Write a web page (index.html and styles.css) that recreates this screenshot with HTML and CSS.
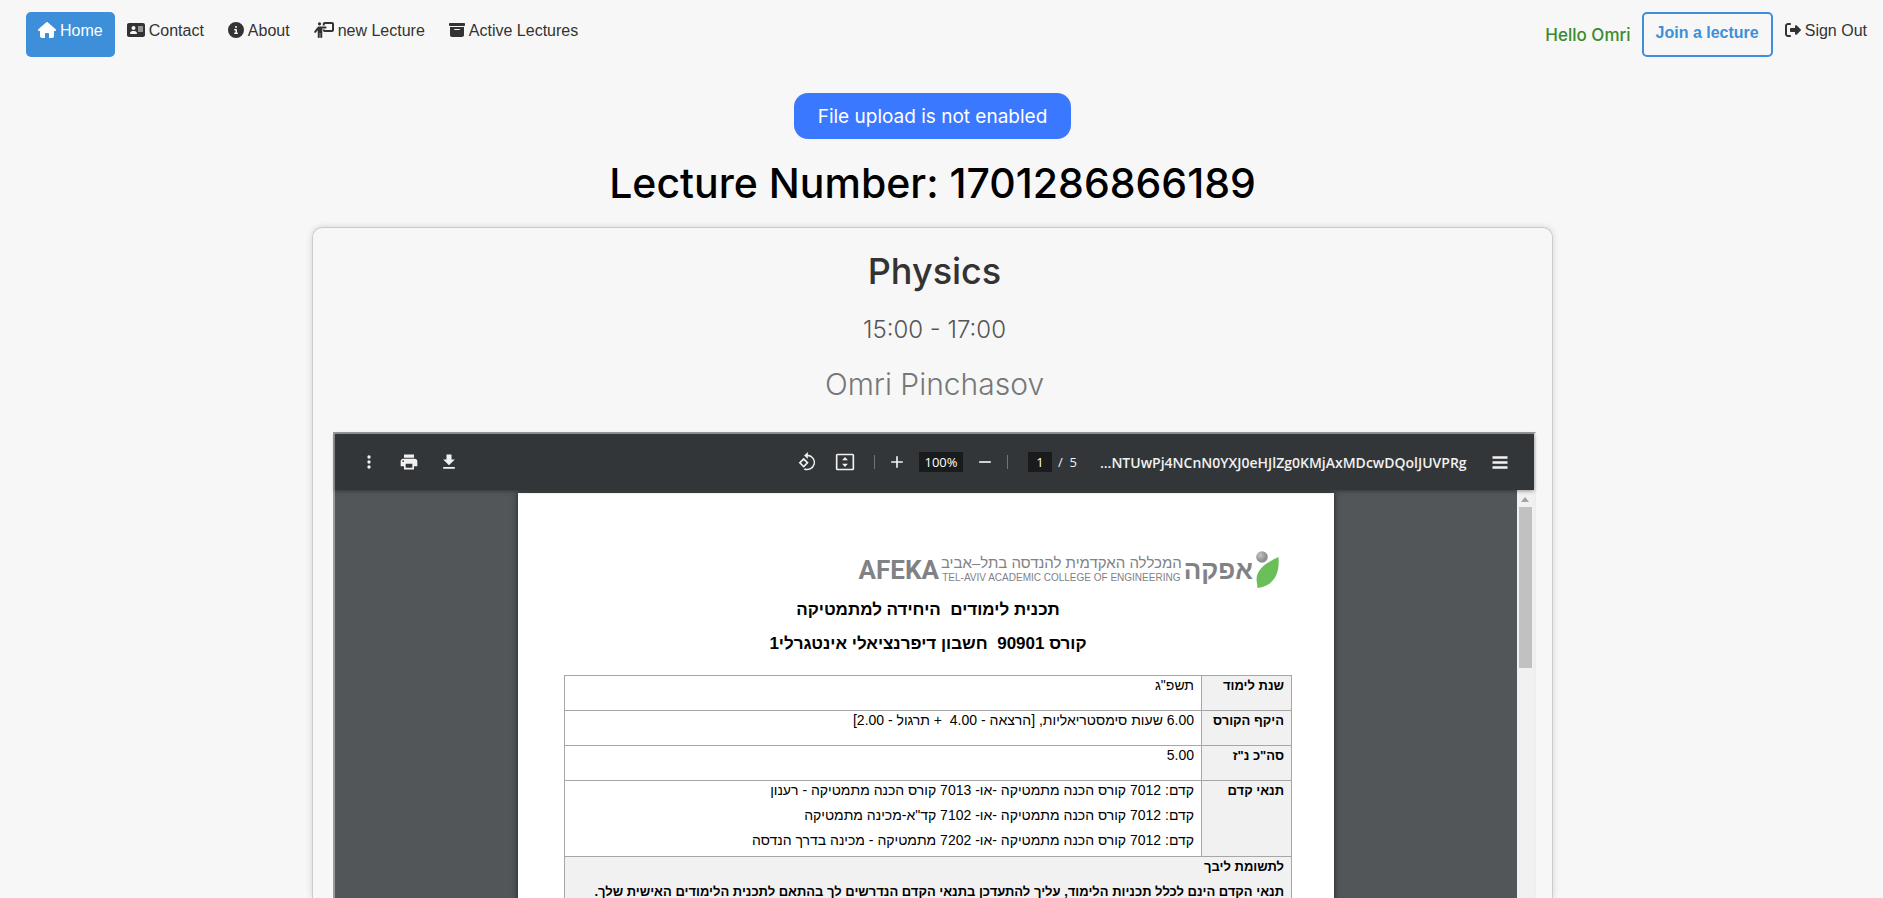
FILE: index.html
```html
<!DOCTYPE html>
<html lang="en">
<head>
<meta charset="utf-8">
<title>Lecture</title>
<link rel="stylesheet" href="styles.css">
</head>
<body>
<header class="navbar">
  <nav class="nav-group">
    <a href="#" class="nav-link active"><svg class="icon" viewBox="0 0 576 512"><path d="M575.800 255.500c0 18-15 32.100-32 32.100h-32l.7 160.200c.2 35.500-28.500 64.300-64 64.300H352V384c0-17.700-14.300-32-32-32h-64c-17.700 0-32 14.300-32 32v128h-96.500c-35.300 0-64-28.700-64-64V287.600H32c-18 0-32-14-32-32.100 0-9 3-17 10-24L266.400 8c7-7 15-8 22-8s15 2 21 7l255.400 224.500c8 7 12 15 11 24z"/></svg><span>Home</span></a>
    <a href="#" class="nav-link"><svg class="icon" viewBox="0 0 576 512"><path fill-rule="evenodd" d="M64 32C28.700 32 0 60.700 0 96v320c0 35.300 28.700 64 64 64h448c35.300 0 64-28.700 64-64V96c0-35.300-28.700-64-64-64zM208 256a64 64 0 1 0 0-128 64 64 0 1 0 0 128zm-32 32c-44.200 0-80 35.800-80 80 0 8.800 7.200 16 16 16h192c8.800 0 16-7.200 16-16 0-44.200-35.800-80-80-80zM352 144v32h160v-32zm0 64v32h160v-32zm0 64v32h160v-32z"/></svg><span>Contact</span></a>
    <a href="#" class="nav-link"><svg class="icon" viewBox="0 0 512 512"><path fill-rule="evenodd" d="M256 512A256 256 0 1 0 256 0a256 256 0 1 0 0 512zM216 336h24v-64h-24c-13 0-24-11-24-24s11-24 24-24h48c13 0 24 11 24 24v88h8c13 0 24 11 24 24s-11 24-24 24h-80c-13 0-24-11-24-24s11-24 24-24zm40-208a32 32 0 1 1 0 64 32 32 0 1 1 0-64z"/></svg><span>About</span></a>
    <a href="#" class="nav-link"><svg class="icon" viewBox="0 0 640 512"><circle cx="176" cy="56" r="52"/><path fill-rule="evenodd" d="M160 140h212c20 0 32 12 32 32s-12 32-32 32H264v276c0 18-14 32-32 32s-32-14-32-32V350h-16v130c0 18-14 32-32 32s-32-14-32-32V262l-58 74c-11 14-30 17-44 7s-17-30-7-44l86-116c17-25 36-43 63-43zM344 0h232c36 0 64 28 64 64v192c0 36-28 64-64 64H344c-36 0-64-28-64-64v-18h64v18h232V64H344v44h-64V64c0-36 28-64 64-64z"/></svg><span>new Lecture</span></a>
    <a href="#" class="nav-link"><svg class="icon" viewBox="0 0 512 512"><path fill-rule="evenodd" d="M32 32h448c17.700 0 32 14.300 32 32v32c0 17.700-14.300 32-32 32H32c-17.700 0-32-14.300-32-32V64c0-17.700 14.300-32 32-32zm0 128h448v256c0 35.300-28.700 64-64 64H96c-35.300 0-64-28.700-64-64zm128 80c0 8.800 7.200 16 16 16h160c8.800 0 16-7.200 16-16s-7.200-16-16-16H176c-8.800 0-16 7.200-16 16z"/></svg><span>Active Lectures</span></a>
  </nav>
  <div class="nav-group">
    <span class="greeting">Hello Omri</span>
    <button type="button" class="join">Join a lecture</button>
    <a href="#" class="nav-link"><svg class="icon" viewBox="0 0 512 512"><path d="M505 273c9.400-9.400 9.400-24.600 0-34L377.900 113.900c-6.400-6.400-15-9.900-24-9.900-18.700 0-33.900 15.200-33.900 33.900V192H192c-17.700 0-32 14.300-32 32v64c0 17.700 14.300 32 32 32h128v54.100c0 18.700 15.200 33.900 33.900 33.900 9 0 17.600-3.600 24-9.900zM160 96c17.700 0 32-14.300 32-32s-14.300-32-32-32H96C43 32 0 75 0 128v256c0 53 43 96 96 96h64c17.700 0 32-14.300 32-32s-14.300-32-32-32H96c-17.700 0-32-14.300-32-32V128c0-17.700 14.300-32 32-32z"/></svg><span>Sign Out</span></a>
  </div>
</header>

<main class="content">
  <button type="button" class="notice">File upload is not enabled</button>
  <h1 class="lecture-number">Lecture Number: 1701286866189</h1>
  <section class="card">
    <h2 class="course">Physics</h2>
    <p class="hours">15:00 - 17:00</p>
    <p class="lecturer">Omri Pinchasov</p>

    <div class="viewer">
      <div class="toolbar">
        <div class="tools">
          <button type="button" class="tool" aria-label="More"><svg viewBox="0 0 24 24"><path d="M12 8a2 2 0 1 0 0-4 2 2 0 0 0 0 4zm0 2a2 2 0 1 0 0 4 2 2 0 0 0 0-4zm0 6a2 2 0 1 0 0 4 2 2 0 0 0 0-4z"/></svg></button>
          <button type="button" class="tool" aria-label="Print"><svg viewBox="0 0 24 24"><path d="M19 8H5c-1.660 0-3 1.340-3 3v6h4v4h12v-4h4v-6c0-1.660-1.340-3-3-3zm-3 11H8v-5h8v5zM5 12a1 1 0 1 1 0-2 1 1 0 0 1 0 2zM18 3H6v4h12V3z"/></svg></button>
          <button type="button" class="tool" aria-label="Download"><svg viewBox="0 0 24 24"><path d="M19 9h-4V3H9v6H5l7 7 7-7zM5 18v2h14v-2H5z"/></svg></button>
        </div>
        <div class="tools center">
          <button type="button" class="tool" aria-label="Rotate"><svg viewBox="0 0 24 24"><path fill-rule="evenodd" d="M8 7 2 13l6 6 6-6zM4.800 13 8 9.800l3.200 3.200L8 16.200zM13 0v3a9.500 9.500 0 1 1-5 18l1.600-1.600A7.500 7.500 0 1 0 13 5v3.500L8.500 4.200z"/></svg></button>
          <button type="button" class="tool" aria-label="Fit to page"><svg viewBox="0 0 24 24"><path fill-rule="evenodd" d="M3 2h18a2 2 0 0 1 2 2v16a2 2 0 0 1-2 2H3a2 2 0 0 1-2-2V4a2 2 0 0 1 2-2zm0 2v16h18V4zm9 2 3.500 4h-7zm0 12-3.500-4h7z"/></svg></button>
          <span class="divider"></span>
          <button type="button" class="tool narrow" aria-label="Zoom in"><svg viewBox="0 0 24 24"><path d="M19 13h-6v6h-2v-6H5v-2h6V5h2v6h6z"/></svg></button>
          <input class="field zoom" type="text" value="100%" aria-label="Zoom level">
          <button type="button" class="tool narrow" aria-label="Zoom out"><svg viewBox="0 0 24 24"><path d="M5 11h14v2H5z"/></svg></button>
          <span class="divider"></span>
          <input class="field page-no" type="text" value="1" aria-label="Page number">
          <span class="page-count">/&nbsp; 5</span>
        </div>
        <div class="tools end">
          <span class="filename">...NTUwPj4NCnN0YXJ0eHJlZg0KMjAxMDcwDQolJUVPRg</span>
          <button type="button" class="tool" aria-label="Menu"><svg viewBox="0 0 24 24"><path d="M3 5h18v3H3zm0 6h18v3H3zm0 6h18v3H3z"/></svg></button>
        </div>
      </div>
      <div class="stage">
        <div class="scroll-area">
          <article class="page" dir="rtl" lang="he">
            <div class="brand" dir="ltr">
              <span class="brand-latin">AFEKA</span>
              <span class="brand-lines"><span class="line-he">המכללה האקדמית להנדסה בתל–אביב</span><span class="line-en">TEL-AVIV ACADEMIC COLLEGE OF ENGINEERING</span></span>
              <span class="brand-he">אפקה</span>
              <svg class="leaf" viewBox="0 0 24 38"><defs><radialGradient id="ball" cx=".35" cy=".35"><stop offset="0" stop-color="#c4c4c4"/><stop offset="1" stop-color="#909090"/></radialGradient></defs><circle cx="7" cy="6" r="5.800" fill="url(#ball)"/><path d="M23.500 6C13 11 2 17 1.500 28L2.500 37C18 35 25 24 23.500 6z" fill="#6bbf59"/></svg>
            </div>
            <h3 class="doc-title">תכנית לימודים&nbsp; היחידה למתמטיקה</h3>
            <h3 class="doc-title">קורס 90901&nbsp; חשבון דיפרנציאלי אינטגרלי1</h3>
            <table class="info">
              <tr><th scope="row">שנת לימוד</th><td>תשפ"ג</td></tr>
              <tr><th scope="row">היקף הקורס</th><td>6.00 שעות סימסטריאליות, [הרצאה - 4.00&nbsp; + תרגול - 2.00]</td></tr>
              <tr><th scope="row">סה"כ נ"ז</th><td>5.00</td></tr>
              <tr><th scope="row">תנאי קדם</th><td><p>קדם: 7012 קורס הכנה מתמטיקה -או- 7013 קורס הכנה מתמטיקה - רענון</p><p>קדם: 7012 קורס הכנה מתמטיקה -או- 7102 קד"א-מכינה מתמטיקה</p><p>קדם: 7012 קורס הכנה מתמטיקה -או- 7202 מתמטיקה - מכינה בדרך הנדסה</p></td></tr>
              <tr><th colspan="2"><p>לתשומת ליבך</p><p>תנאי הקדם הינם לכלל תכניות הלימוד, עליך להתעדכן בתנאי הקדם הנדרשים לך בהתאם לתכנית הלימודים האישית שלך.</p></th></tr>
            </table>
          </article>
        </div>
        <div class="scrollbar"><span class="arrow"></span><span class="thumb"></span></div>
      </div>
    </div>
  </section>
</main>
</body>
</html>
```
FILE: styles.css
```css
* { box-sizing: border-box; }
html, body { height: 100%; }
body {
  margin: 0;
  display: flex;
  flex-direction: column;
  overflow: hidden;
  background: #f7f7f7;
  color: #333;
  font-family: "Liberation Sans", Arial, sans-serif;
  font-size: 16px;
}
h1, h2, h3, p { margin: 0; }
button, input { font: inherit; }

.navbar {
  display: flex;
  justify-content: space-between;
  padding: 12px 4px 0 26px;
}
.nav-group { display: flex; }
.nav-link {
  display: flex;
  gap: 4px;
  height: 45px;
  padding: 10px 12px;
  border-radius: 5px;
  color: #333;
  line-height: 18px;
  text-decoration: none;
}
.nav-link.active { background: #3d8fd9; color: #fff; }
.icon { height: 16px; fill: currentColor; }
.greeting {
  padding: 11px 11px 0 0;
  color: #3a8a2a;
  font-family: Inter, sans-serif;
  font-weight: 500;
  font-size: 17px;
  line-height: 24px;
}
.join {
  height: 45px;
  padding: 0 12px 4px;
  border: 2px solid #3d8fd9;
  border-radius: 5px;
  background: none;
  color: #3d8fd9;
  font-weight: bold;
}

.content {
  flex: 1;
  display: flex;
  flex-direction: column;
  align-items: center;
  min-height: 0;
  padding: 36px 18px 0 0;
  font-family: Inter, sans-serif;
}
.notice {
  height: 46px;
  padding: 0 24px;
  border: 0;
  border-radius: 14px;
  background: #3a79ff;
  color: #fff;
  font-size: 19px;
}
.lecture-number {
  margin-top: 20px;
  color: #000;
  font-size: 41px;
  font-weight: 500;
  line-height: 48px;
}
.card {
  flex: 1;
  display: flex;
  flex-direction: column;
  align-items: center;
  width: 66.5%;
  margin-top: 20px;
  padding: 20px 16px 0 20px;
  min-height: 0;
  border: 1px solid #ccc;
  border-bottom: 0;
  border-radius: 10px 10px 0 0;
  box-shadow: 0 0 6px rgba(0, 0, 0, .15);
}
.course { font-size: 36px; font-weight: 500; line-height: 46px; }
.hours { margin-top: 21px; color: #555; font-size: 24px; font-weight: 300; line-height: 30px; }
.lecturer { margin-top: 20px; color: #777; font-size: 30px; font-weight: 300; line-height: 38px; }

.viewer {
  flex: 1;
  display: flex;
  flex-direction: column;
  align-self: stretch;
  min-height: 0;
  margin-top: 29px;
  border: 2px solid #9a9a9a;
  border-right-color: #eee;
  border-bottom: 0;
}
.toolbar {
  display: grid;
  grid-template-columns: 1fr auto 1fr;
  align-items: center;
  z-index: 1;
  height: 56px;
  flex: none;
  padding: 0 14px;
  background: #323639;
  color: #f1f1f1;
  box-shadow: 0 1px 4px rgba(0, 0, 0, .4);
  font-family: "Open Sans", sans-serif;
  font-size: 13px;
}
.tools { display: flex; align-items: center; }
.tools.center { padding-right: 4px; }
.tools.end { justify-content: flex-end; gap: 13px; }
.tool {
  width: 40px;
  height: 32px;
  padding: 0;
  border: 0;
  background: none;
  color: inherit;
}
.center .tool { width: 38px; }
.center .narrow { width: 44px; }
.tool svg { display: block; width: 20px; height: 20px; margin: auto; fill: currentColor; }
.divider { width: 1px; height: 14px; margin-left: 10px; background: #70757a; }
.field {
  height: 20px;
  padding: 0;
  border: 0;
  background: #191b1c;
  color: #fff;
  text-align: center;
}
.zoom { width: 44px; }
.page-no { width: 24px; margin: 0 6px 0 20px; }
.divider:nth-of-type(2) { margin-left: 0; }
.filename { font-size: 14px; font-weight: 600; }

.stage { flex: 1; display: flex; min-height: 0; background: #525659; }
.scroll-area { flex: 1; padding-top: 3px; overflow: hidden; }
.page {
  width: 816px;
  height: 1056px;
  margin: 0 auto;
  padding: 52px 42px 0 46px;
  background: #fff;
  box-shadow: 0 0 6px rgba(0, 0, 0, .6);
  color: #000;
  font-family: "Liberation Sans", Arial, sans-serif;
}
.brand {
  display: flex;
  align-items: center;
  justify-content: flex-end;
  gap: 2px;
  height: 46px;
  margin: 2px 13px 0 0;
  color: #808285;
  white-space: nowrap;
}
.brand-latin { font-family: Roboto, sans-serif; font-size: 26px; font-weight: bold; }
.brand-lines { display: flex; flex-direction: column; align-items: center; }
.line-he { font-size: 15px; line-height: 16px; }
.line-en { font-size: 10px; line-height: 14px; }
.brand-he { font-size: 26px; font-weight: bold; line-height: 40px; }
.leaf { width: 24px; height: 38px; }
.doc-title { font-size: 17px; line-height: 34px; text-align: center; }
.doc-title + .doc-title { margin-bottom: 14px; }

.info {
  width: 100%;
  border-collapse: collapse;
  font-size: 14px;
}
.info th, .info td {
  height: 35px;
  padding: 0 7px;
  border: 1px solid #a6a6a6;
  text-align: right;
  vertical-align: top;
  line-height: 19px;
}
.info th { width: 90px; background: #f1f1f1; font-size: 13px; white-space: nowrap; }
.info p { padding-bottom: 6px; }

.scrollbar {
  display: flex;
  flex-direction: column;
  align-items: center;
  width: 17px;
  padding-top: 7px;
  background: #f1f1f1;
}
.arrow {
  border: 4px solid transparent;
  border-top: 0;
  border-bottom: 5px solid #a3a3a3;
}
.thumb { width: 13px; height: 161px; margin-top: 5px; background: #c1c1c1; }
```
